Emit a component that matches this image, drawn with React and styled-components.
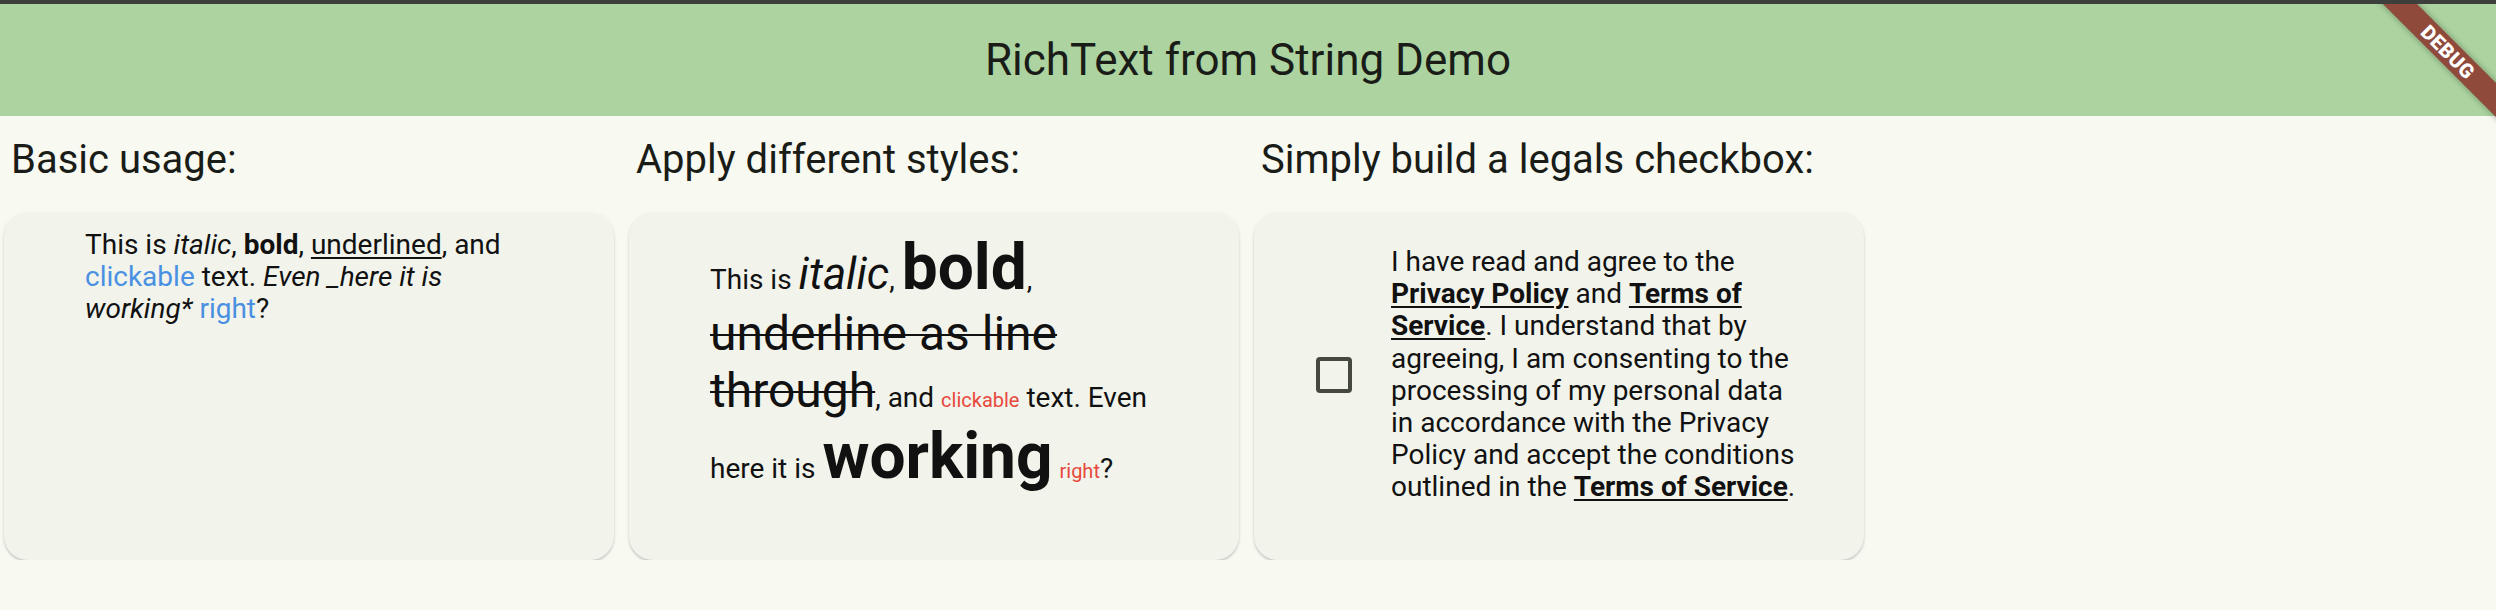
import React from 'react'
import styled, { createGlobalStyle } from 'styled-components'

const GlobalStyle = createGlobalStyle`
  html, body {
    margin: 0;
    padding: 0;
    background-color: #f8faf2;
    font-family: Roboto, "Noto Sans", "Liberation Sans", sans-serif;
  }
`

const TopStrip = styled.div`
  background-color: #3d3f3c;
  height: 4px;
`

const Screen = styled.div`
  overflow: hidden;
  position: relative;
`

const AppBar = styled.header`
  align-items: center;
  background-color: #acd3a0;
  color: #1a1c18;
  display: flex;
  font-size: 44px;
  height: 112px;
  justify-content: center;
`

const Columns = styled.main`
  display: flex;
  gap: 15px;
  padding-left: 4px;
`

const Column = styled.section`
  display: flex;
  flex-direction: column;
  width: 610px;
`

const Heading = styled.h2`
  color: #1a1c18;
  font-size: 40px;
  font-weight: 400;
  line-height: normal;
  margin: 20px 0 30px 7px;
`

const Card = styled.div`
  background-color: #f2f4ec;
  border-radius: 24px;
  box-shadow: 0 2px 2px rgba(0, 0, 0, 0.14), 0 1px 4px rgba(0, 0, 0, 0.08);
  box-sizing: border-box;
  height: 347px;
  padding: ${props => props.padding};
`

const Paragraph = styled.p`
  color: #111;
  font-size: 28px;
  line-height: ${props => props.lineHeight || '32.2px'};
  margin: 0;
`

const Span = styled.span`
  color: ${props => props.color || 'inherit'};
  font-size: ${props => props.size ? `${props.size}px` : 'inherit'};
  font-style: ${props => props.italic ? 'italic' : 'normal'};
  font-weight: ${props => props.bold ? 700 : 400};
  text-decoration: ${props => props.deco || 'none'};
  text-decoration-thickness: ${props => props.deco ? '2px' : 'auto'};
  text-underline-offset: 3px;
`

const LegalRow = styled.div`
  align-items: center;
  display: flex;
`

const CheckboxCell = styled.div`
  align-items: center;
  display: flex;
  flex: 0 0 96px;
  height: 96px;
  justify-content: center;
  margin-right: 9px;
`

const CheckBox = styled.div`
  border: 4px solid #44483e;
  border-radius: 4px;
  box-sizing: border-box;
  height: 36px;
  width: 36px;
`

const BannerClip = styled.div`
  height: 160px;
  overflow: hidden;
  pointer-events: none;
  position: absolute;
  right: 0;
  top: 0;
  width: 160px;
`

const Ribbon = styled.div`
  background-color: #8f4a3c;
  box-shadow: 0 0 6px rgba(0, 0, 0, 0.35);
  color: #fff;
  font-size: 20px;
  font-weight: 900;
  height: 24px;
  left: -8px;
  letter-spacing: 0.5px;
  line-height: 24px;
  position: absolute;
  text-align: center;
  top: 36px;
  transform: rotate(45deg);
  width: 240px;
`

const blue = '#4a90e2'
const red = '#e8483b'

const App = () =>
  <>
    <GlobalStyle />
    <TopStrip />
    <Screen>
      <AppBar>RichText from String Demo</AppBar>

      <Columns>
        <Column>
          <Heading>Basic usage:</Heading>
          <Card padding='16px 70px 0 81px'>
            <Paragraph>
              This is <Span italic>italic</Span>, <Span bold>bold</Span>,{' '}
              <Span deco='underline'>underlined</Span>, and{' '}
              <Span color={blue}>clickable</Span> text.{' '}
              <Span italic>Even _here it is working*</Span>{' '}
              <Span color={blue}>right</Span>?
            </Paragraph>
          </Card>
        </Column>

        <Column>
          <Heading>Apply different styles:</Heading>
          <Card padding='17px 68px 0 81px'>
            <Paragraph lineHeight='normal'>
              This is <Span italic size={44}>italic</Span>,{' '}
              <Span bold size={64}>bold</Span>,{' '}
              <Span size={48} deco='line-through'>underline as line through</Span>, and{' '}
              <Span color={red} size={20}>clickable</Span> text. Even here it is{' '}
              <Span bold size={64}>working</Span>{' '}
              <Span color={red} size={20}>right</Span>?
            </Paragraph>
          </Card>
        </Column>

        <Column>
          <Heading>Simply build a legals checkbox:</Heading>
          <Card padding='33px 61px 0 32px'>
            <LegalRow>
              <CheckboxCell>
                <CheckBox />
              </CheckboxCell>
              <Paragraph>
                I have read and agree to the{' '}
                <Span bold deco='underline'>Privacy Policy</Span> and{' '}
                <Span bold deco='underline'>Terms of Service</Span>. I understand that by
                agreeing, I am consenting to the processing of my personal data in
                accordance with the Privacy Policy and accept the conditions outlined in
                the <Span bold deco='underline'>Terms of Service</Span>.
              </Paragraph>
            </LegalRow>
          </Card>
        </Column>
      </Columns>

      <BannerClip>
        <Ribbon>DEBUG</Ribbon>
      </BannerClip>
    </Screen>
  </>

export default App
